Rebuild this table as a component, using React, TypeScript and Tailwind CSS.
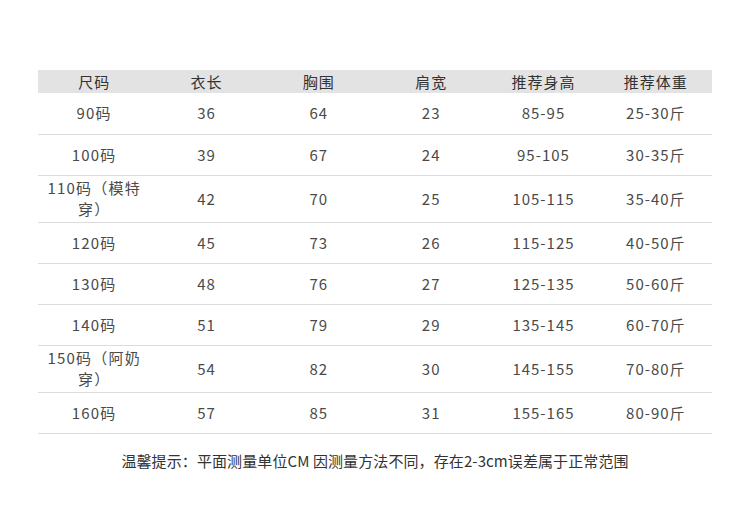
const headers = ["尺码", "衣长", "胸围", "肩宽", "推荐身高", "推荐体重"];

const rows: { size: string[]; cells: string[] }[] = [
  { size: ["90码"], cells: ["36", "64", "23", "85-95", "25-30斤"] },
  { size: ["100码"], cells: ["39", "67", "24", "95-105", "30-35斤"] },
  { size: ["110码（模特", "穿）"], cells: ["42", "70", "25", "105-115", "35-40斤"] },
  { size: ["120码"], cells: ["45", "73", "26", "115-125", "40-50斤"] },
  { size: ["130码"], cells: ["48", "76", "27", "125-135", "50-60斤"] },
  { size: ["140码"], cells: ["51", "79", "29", "135-145", "60-70斤"] },
  { size: ["150码（阿奶", "穿）"], cells: ["54", "82", "30", "145-155", "70-80斤"] },
  { size: ["160码"], cells: ["57", "85", "31", "155-165", "80-90斤"] },
];

export default function App() {
  return (
    <div className="w-[750px] h-[531px] bg-white pt-[70px] pl-[38px] font-['Noto_Sans_CJK_SC',sans-serif]">
      <table className="w-[674px] table-fixed border-collapse">
        <thead>
          <tr className="h-[23px] bg-[#e3e3e3]">
            {headers.map((h) => (
              <th
                key={h}
                className="p-0 text-[15px] leading-[23px] font-normal text-[#333] tracking-[1px] text-center"
              >
                {h}
              </th>
            ))}
          </tr>
        </thead>
        <tbody>
          {rows.map((r) => (
            <tr
              key={r.size[0]}
              className={`border-b border-[#dcdcdc] ${r.size.length > 1 ? "h-[47px]" : "h-[41px]"}`}
            >
              <td className="p-0 pb-[1px] text-center text-[15px] leading-[21px] text-[#4a4a4a] tracking-[1.2px]">
                {r.size.map((s, i) => (
                  <div key={i}>{s}</div>
                ))}
              </td>
              {r.cells.map((c, i) => (
                <td
                  key={i}
                  className="p-0 pb-[1px] text-center text-[15px] leading-[21px] text-[#4a4a4a] tracking-[1px]"
                >
                  {c}
                </td>
              ))}
            </tr>
          ))}
        </tbody>
      </table>
      <p className="mt-[17px] w-[674px] text-center text-[15px] leading-[20px] tracking-[0.1px] text-[#333]">
        温馨提示：平面测量单位CM 因测量方法不同，存在2-3cm误差属于正常范围
      </p>
    </div>
  );
}
